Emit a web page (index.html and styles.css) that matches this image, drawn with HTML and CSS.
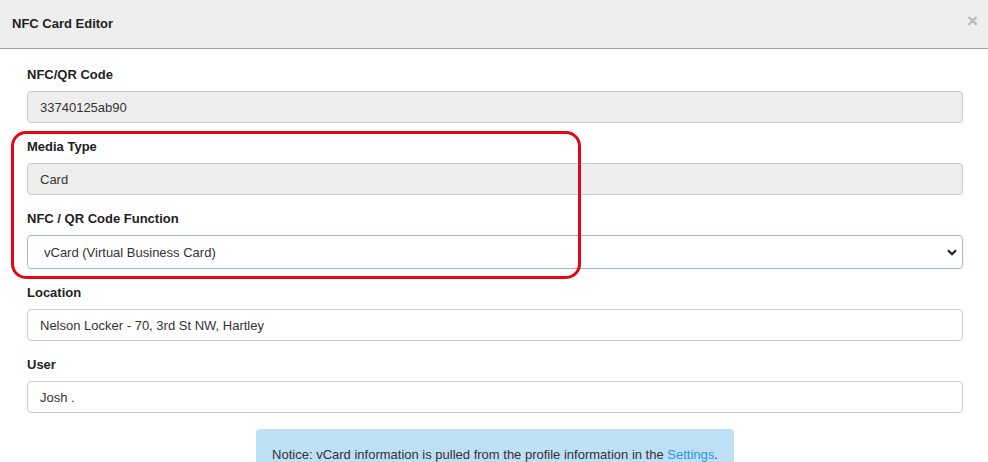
FILE: index.html
```html
<!doctype html>
<html lang="en">
<head>
    <meta charset="UTF-8">
    <title>NFC Card Editor</title>
    <link rel="stylesheet" href="styles.css">
</head>
<body>

    <div class="modal">
        <div class="modal-header">
            <h4 class="modal-title">NFC Card Editor</h4>
            <span class="close">&times;</span>
        </div>
        <div class="modal-body">
            <div class="form-group">
                <label>NFC/QR Code</label>
                <input class="form-control" type="text" value="33740125ab90" readonly>
            </div>
            <div class="form-group">
                <label>Media Type</label>
                <input class="form-control" type="text" value="Card" readonly>
            </div>
            <div class="form-group">
                <label>NFC / QR Code Function</label>
                <div class="select-wrap">
                    <select class="form-control select">
                        <option>vCard (Virtual Business Card)</option>
                    </select>
                    <svg class="chevron" width="10" height="7" viewBox="0 0 10 7"><path d="M1 1.2 5 5.2 9 1.2" fill="none" stroke="#222" stroke-width="2.2"/></svg>
                </div>
            </div>
            <div class="form-group">
                <label>Location</label>
                <input class="form-control editable" type="text" value="Nelson Locker - 70, 3rd St NW, Hartley">
            </div>
            <div class="form-group">
                <label>User</label>
                <input class="form-control editable" type="text" value="Josh .">
            </div>
            <div class="notice">
                Notice: vCard information is pulled from the profile information in the <a href="javascript:void(0)">Settings</a>.
            </div>
        </div>
        <!-- highlight around media type + function -->
        <div class="highlight"></div>
    </div>

</body>
</html>
```

FILE: styles.css
```css
*{
    padding: 0;
    margin: 0;
    box-sizing: border-box;
}
body{
    font-family: "Liberation Sans", Arial, sans-serif;
    font-size: 13px;
    color: #333;
    background-color: #fff;
    overflow: hidden;
}
.modal{
    position: relative;
    width: 988px;
    height: 462px;
    overflow: hidden;
}
.modal-header{
    height: 49px;
    background-color: #eee;
    border-bottom: 1px solid #a3a3a3;
    display: flex;
    align-items: center;
    justify-content: space-between;
    padding: 0 10px 2px 12px;
}
.modal-title{
    font-size: 13px;
    font-weight: bold;
    color: #222;
}
.close{
    font-size: 19px;
    font-weight: bold;
    color: #bbb;
    line-height: 1;
    margin-top: -6px;
}
.modal-body{
    padding: 18px 25px 0 27px;
}
.form-group{
    margin-bottom: 16px;
}
.form-group.wide{
    margin-bottom: 17px;
}
.form-group label{
    display: block;
    font-weight: bold;
    font-size: 13px;
    line-height: 16px;
    color: #222;
    margin-bottom: 8px;
}
.form-control{
    display: block;
    width: 100%;
    height: 32px;
    padding: 0 12px;
    font-family: "Liberation Sans", Arial, sans-serif;
    font-size: 13px;
    color: #333;
    background-color: #eee;
    border: 1px solid #ccc;
    border-radius: 4px;
    outline: none;
}
.form-control.editable{
    background-color: #fff;
}
.select-wrap{
    position: relative;
}
.select{
    -webkit-appearance: none;
    appearance: none;
    height: 34px;
    background-color: #fff;
    border-color: #a6b3d6;
    padding-left: 16px;
}
.chevron{
    position: absolute;
    right: 6px;
    top: 14px;
}
.notice{
    width: 478px;
    margin: 0 auto;
    padding: 18px 10px 20px;
    background-color: #bee0f5;
    border-radius: 4px;
    text-align: center;
    color: #333;
}
.notice a{
    color: #2e95dc;
    text-decoration: none;
}
.highlight{
    position: absolute;
    left: 11px;
    top: 131px;
    width: 570px;
    height: 148px;
    border: 3px solid #e30613;
    border-radius: 15px;
}
```
